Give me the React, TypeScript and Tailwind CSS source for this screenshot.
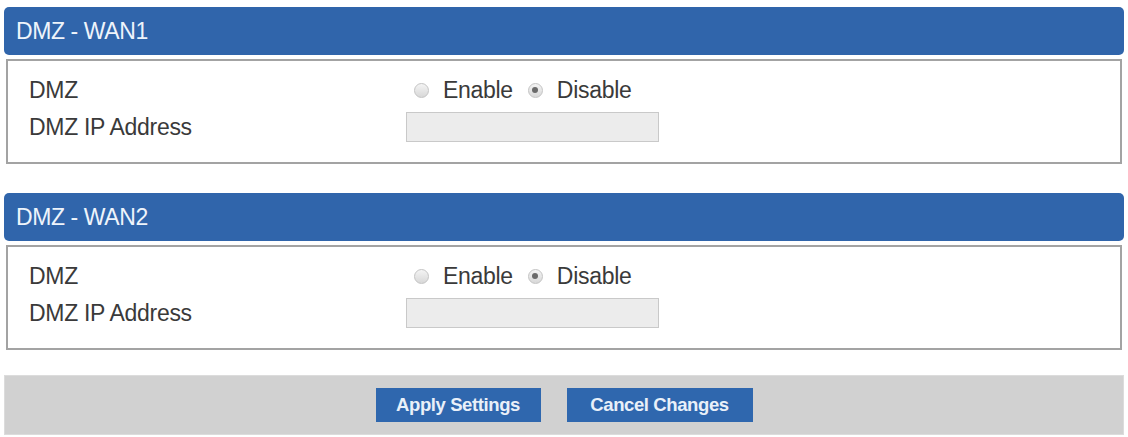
const font = { fontFamily: '"Liberation Sans", Arial, sans-serif' };

const Radio = ({ checked }: { checked?: boolean }) => (
  <span className="flex h-[15px] w-[15px] items-center justify-center rounded-full border border-[#c4c4c4] bg-gradient-to-b from-[#f4f4f4] to-[#d8d8d8]">
    {checked && <span className="h-[6px] w-[6px] rounded-full bg-[#6a6a6a]" />}
  </span>
);

const DmzSection = ({ title }: { title: string }) => (
  <div>
    <div className="flex h-[48px] items-center rounded-[5px] bg-[#3065ab] pl-[12px] text-[23px] leading-none tracking-[-0.4px] text-[#eef4fb]">
      {title}
    </div>
    <div className="mx-[2px] mt-[4px] border-2 border-[#a3a3a3] bg-white pb-[14px] pl-[21px] pt-[13px] text-[23px] leading-none tracking-[-0.3px] text-[#3a3a3a]">
      <div className="flex h-[32px] items-center">
        <div className="w-[377px]">DMZ</div>
        <div className="flex items-center">
          <span className="ml-[8px]">
            <Radio />
          </span>
          <span className="ml-[14px]">Enable</span>
          <span className="ml-[15px]">
            <Radio checked />
          </span>
          <span className="ml-[14px]">Disable</span>
        </div>
      </div>
      <div className="flex h-[42px] items-center">
        <div className="w-[377px]">DMZ IP Address</div>
        <div className="h-[30px] w-[253px] border border-[#c9c9c9] bg-[#ececec]" />
      </div>
    </div>
  </div>
);

export default function App() {
  return (
    <div className="h-[437px] w-[1128px] bg-white px-[4px] pt-[7px]" style={font}>
      <div className="w-[1120px]">
        <DmzSection title="DMZ - WAN1" />
        <div className="mt-[29px]">
          <DmzSection title="DMZ - WAN2" />
        </div>
        <div className="mt-[25px] flex h-[60px] items-center justify-center gap-[26px] border border-[#dcdcdc] bg-[#d1d1d1]">
          <button className="h-[34px] w-[165px] bg-[#2f67ae] text-[18.5px] font-bold tracking-[-0.4px] text-[#e9f0f9]">
            Apply Settings
          </button>
          <button className="h-[34px] w-[186px] bg-[#2f67ae] text-[18.5px] font-bold tracking-[-0.4px] text-[#e9f0f9]">
            Cancel Changes
          </button>
        </div>
      </div>
    </div>
  );
}
